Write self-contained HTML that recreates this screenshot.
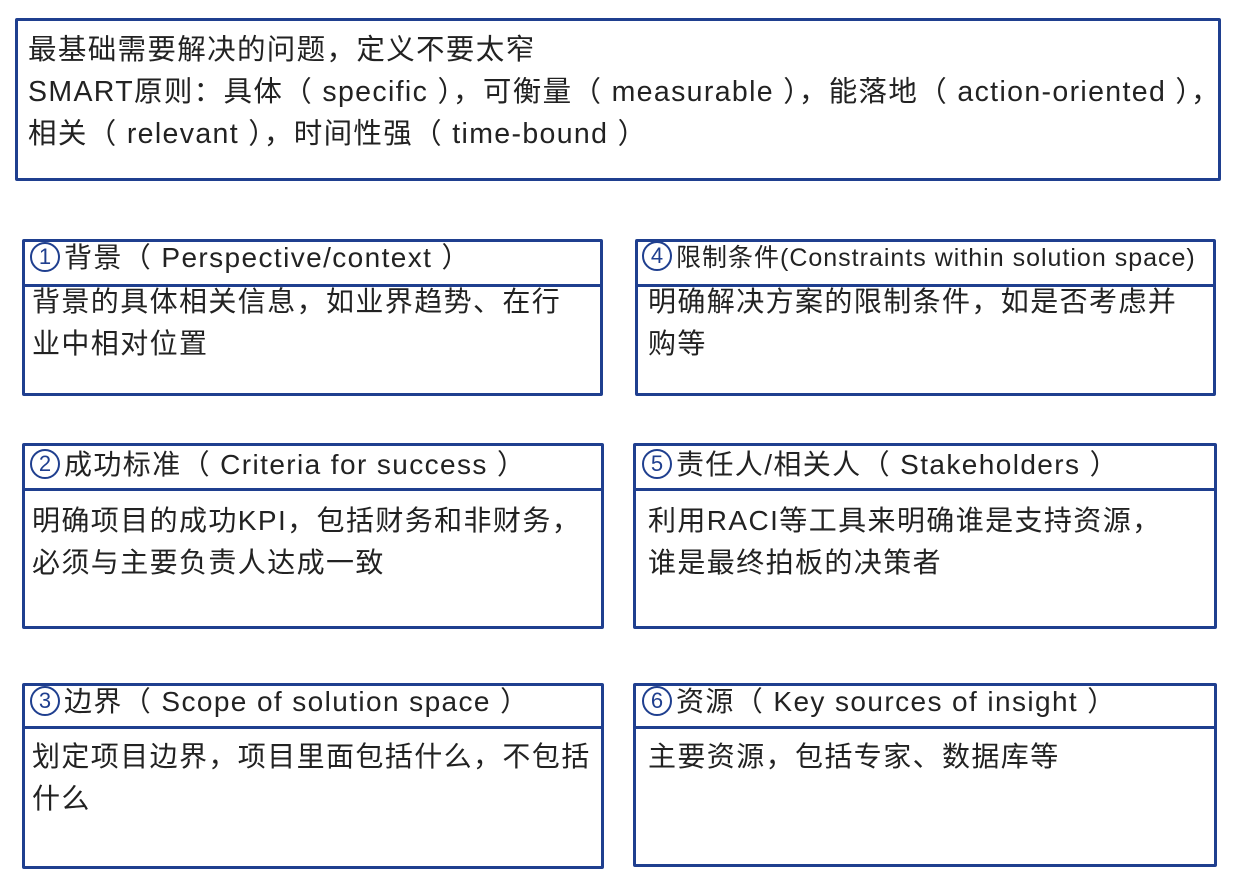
<!DOCTYPE html>
<html><head><meta charset="utf-8"><style>
body{margin:0;width:1233px;height:879px;background:#fff;position:relative;overflow:hidden;font-family:"Liberation Sans","Noto Sans CJK SC",sans-serif;color:#222;}
.b{position:absolute;border:3px solid #1f3f8f;box-sizing:border-box;border-radius:2px;}
.t{position:absolute;font-size:28px;line-height:42px;white-space:nowrap;letter-spacing:1.4px;}
.h{position:absolute;left:0;right:0;top:0;border-bottom:3px solid #1f3f8f;}
.c{display:inline-block;width:30px;height:30px;border:2.5px solid #1f3f8f;border-radius:50%;box-sizing:border-box;text-align:center;font-size:22px;line-height:25px;color:#1f3f8f;vertical-align:middle;margin-right:4px;position:relative;top:-3px;letter-spacing:0}
</style></head><body>
<div class="b" style="left:15px;top:18px;width:1206px;height:163px"></div>
<div class="t" style="left:28px;top:29px;font-size:28.5px;letter-spacing:1.35px">最基础需要解决的问题，定义不要太窄<br>SMART原则：具体（ specific ），可衡量（ measurable ），能落地（ action-oriented ），<br>相关（ relevant ），时间性强（ time-bound ）</div>

<div class="b" style="left:22px;top:239px;width:581px;height:157px"><div class="h" style="height:42px"></div></div>
<div class="t" style="left:30px;top:237px;"><span class="c">1</span>背景（ Perspective/context ）</div>
<div class="t" style="left:32px;top:281px;">背景的具体相关信息，如业界趋势、在行<br>业中相对位置</div>

<div class="b" style="left:635px;top:239px;width:581px;height:157px"><div class="h" style="height:42px"></div></div>
<div class="t" style="left:642px;top:237px;font-size:25px;letter-spacing:1px"><span class="c">4</span>限制条件(Constraints within solution space)</div>
<div class="t" style="left:648px;top:281px;">明确解决方案的限制条件，如是否考虑并<br>购等</div>

<div class="b" style="left:22px;top:443px;width:582px;height:186px"><div class="h" style="height:42px"></div></div>
<div class="t" style="left:30px;top:444px;"><span class="c">2</span>成功标准（ Criteria for success ）</div>
<div class="t" style="left:32px;top:500px;">明确项目的成功KPI，包括财务和非财务，<br>必须与主要负责人达成一致</div>

<div class="b" style="left:633px;top:443px;width:584px;height:186px"><div class="h" style="height:42px"></div></div>
<div class="t" style="left:642px;top:444px;"><span class="c">5</span>责任人/相关人（ Stakeholders ）</div>
<div class="t" style="left:648px;top:500px;">利用RACI等工具来明确谁是支持资源，<br>谁是最终拍板的决策者</div>

<div class="b" style="left:22px;top:683px;width:582px;height:186px"><div class="h" style="height:40px"></div></div>
<div class="t" style="left:30px;top:681px;"><span class="c">3</span>边界（ Scope of solution space ）</div>
<div class="t" style="left:32px;top:736px;">划定项目边界，项目里面包括什么，不包括<br>什么</div>

<div class="b" style="left:633px;top:683px;width:584px;height:184px"><div class="h" style="height:40px"></div></div>
<div class="t" style="left:642px;top:681px;"><span class="c">6</span>资源（ Key sources of insight ）</div>
<div class="t" style="left:648px;top:736px;">主要资源，包括专家、数据库等</div>
</body></html>
